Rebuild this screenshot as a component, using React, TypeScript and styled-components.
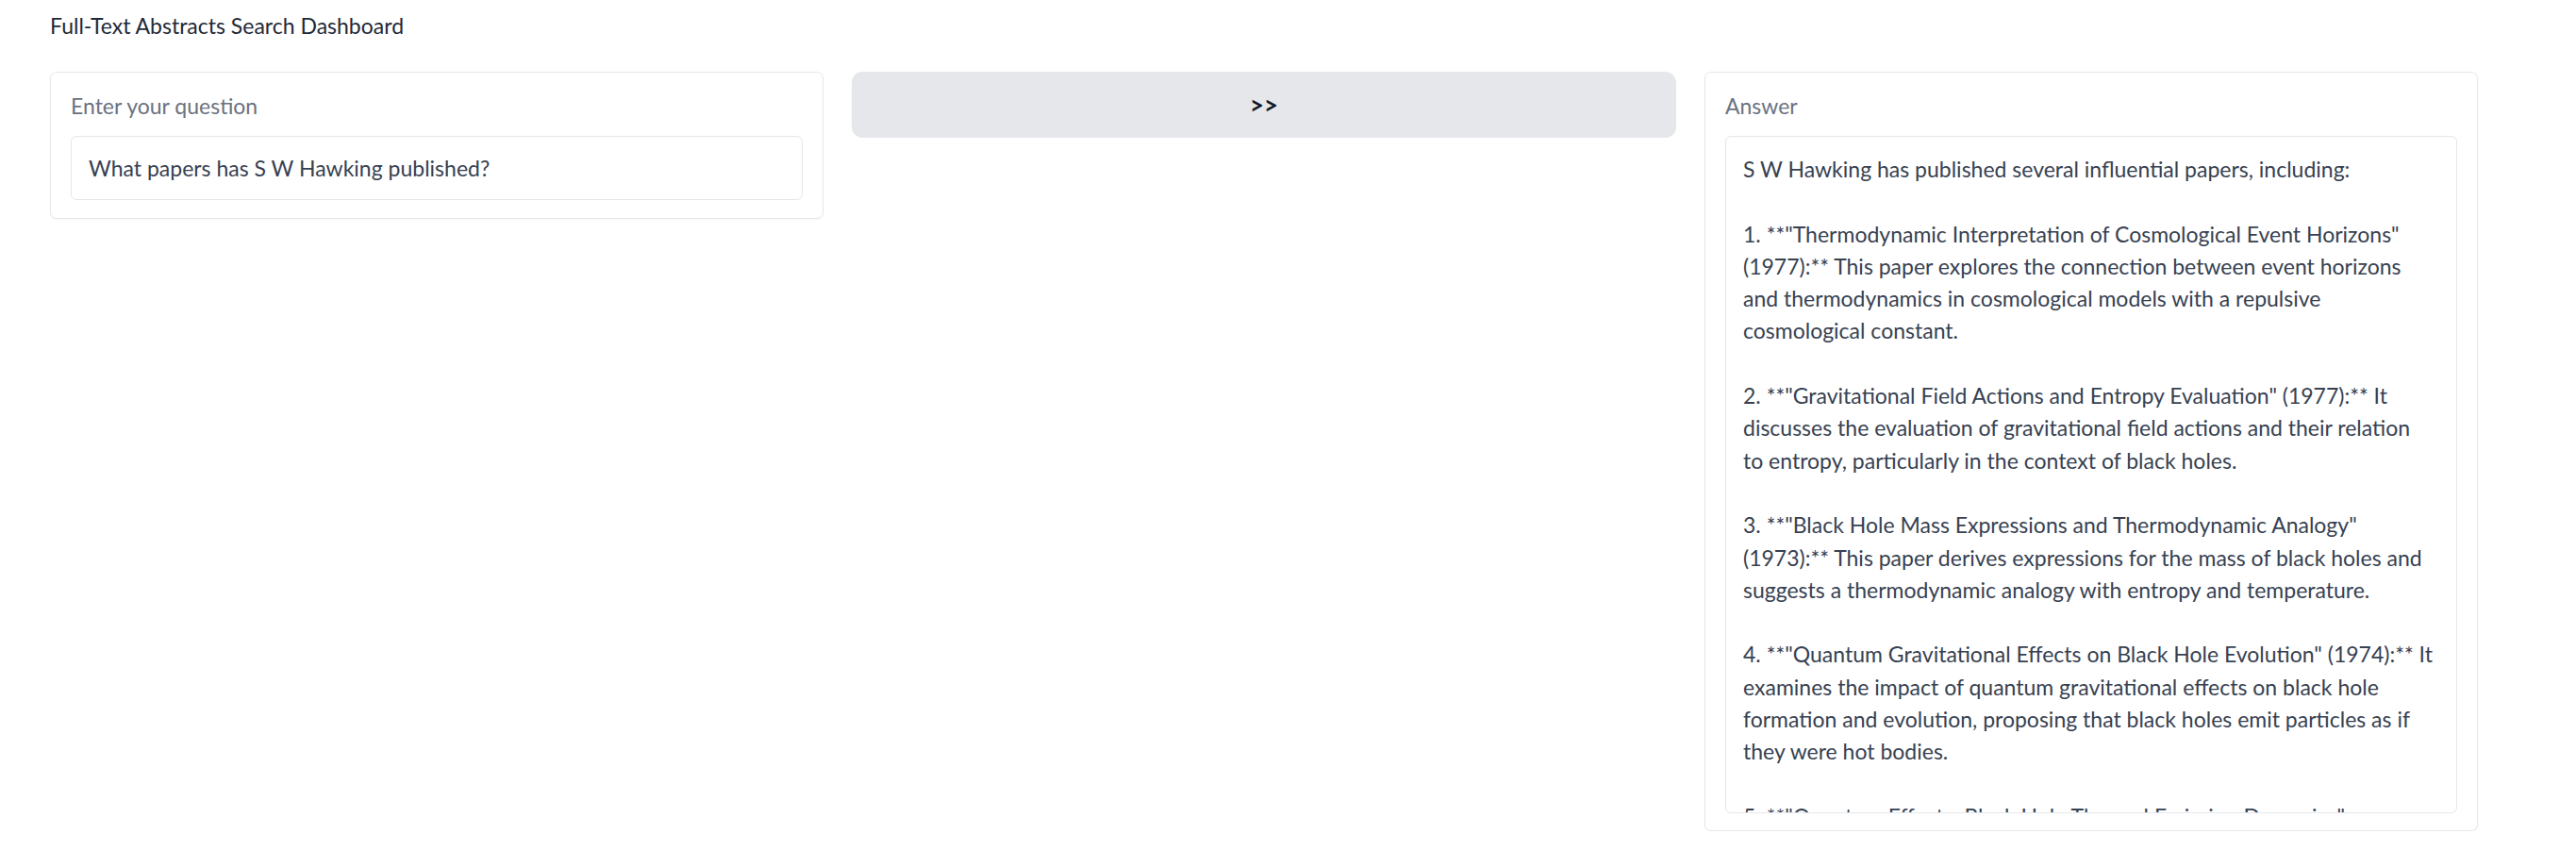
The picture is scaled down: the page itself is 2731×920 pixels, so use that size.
import React from 'react';
import styled, { createGlobalStyle } from 'styled-components';

const GlobalStyle = createGlobalStyle`
  html,
  body {
    margin: 0;
    padding: 0;
    background: #ffffff;
  }

  body {
    font-family: Lato, 'Noto Sans', sans-serif;
    color: #1f2937;
  }

  * {
    box-sizing: border-box;
  }
`;

const Page = styled.main`
  padding: 10px 104px 0 53px;
`;

const Title = styled.h1`
  margin: 0;
  font-size: 23px;
  font-weight: 400;
  line-height: 34.5px;
  color: #1f2937;
`;

const Row = styled.div`
  display: grid;
  grid-template-columns: 820px 874px 820px;
  gap: 30px;
  align-items: start;
  margin-top: 31px;
`;

interface CardProps {
  $tall?: boolean;
}

const Card = styled.section<CardProps>`
  display: flex;
  flex-direction: column;
  gap: 14.5px;
  padding: 18px 21px ${({ $tall }) => ($tall ? '18px' : '19px')};
  border: 1px solid #e5e7eb;
  border-radius: 7px;
  background: #ffffff;
  box-shadow: 0 1px 2px rgba(0, 0, 0, 0.04);
`;

const Label = styled.label`
  font-size: 23px;
  line-height: 34.5px;
  color: #6b7280;
`;

const fieldStyles = `
  width: 100%;
  margin: 0;
  padding: 16px 18px;
  border: 1px solid #e5e7eb;
  border-radius: 6px;
  background: #ffffff;
  font-family: Lato, 'Noto Sans', sans-serif;
  font-size: 23px;
  line-height: 34.3px;
  color: #374151;
  outline: none;
  box-shadow: inset 0 1px 1px rgba(0, 0, 0, 0.02);
`;

const QuestionInput = styled.input`
  ${fieldStyles}
  height: 68px;
`;

const AnswerBox = styled.textarea`
  ${fieldStyles}
  padding-top: 17.5px;
  height: 718px;
  resize: none;
  overflow: hidden;
  white-space: pre;
`;

const SubmitButton = styled.button`
  height: 70px;
  border: 1px solid #e5e7eb;
  border-radius: 11px;
  background: #e5e7eb;
  font-family: Lato, 'Noto Sans', sans-serif;
  font-size: 26px;
  font-weight: 700;
  color: #111827;
  cursor: pointer;
`;

const answer = `S W Hawking has published several influential papers, including:

1. **"Thermodynamic Interpretation of Cosmological Event Horizons"
(1977):** This paper explores the connection between event horizons
and thermodynamics in cosmological models with a repulsive
cosmological constant.

2. **"Gravitational Field Actions and Entropy Evaluation" (1977):** It
discusses the evaluation of gravitational field actions and their relation
to entropy, particularly in the context of black holes.

3. **"Black Hole Mass Expressions and Thermodynamic Analogy"
(1973):** This paper derives expressions for the mass of black holes and
suggests a thermodynamic analogy with entropy and temperature.

4. **"Quantum Gravitational Effects on Black Hole Evolution" (1974):** It
examines the impact of quantum gravitational effects on black hole
formation and evolution, proposing that black holes emit particles as if
they were hot bodies.

5. **"Quantum Effects: Black Hole Thermal Emission Dynamics"
(1975):** This paper studies the thermal emission of black holes.`;

const App = (): JSX.Element => (
  <>
    <GlobalStyle />
    <Page>
      <Title>Full-Text Abstracts Search Dashboard</Title>
      <Row>
        <Card>
          <Label htmlFor="question">Enter your question</Label>
          <QuestionInput id="question" type="text" defaultValue="What papers has S W Hawking published?" />
        </Card>
        <SubmitButton type="button">&gt;&gt;</SubmitButton>
        <Card $tall>
          <Label htmlFor="answer">Answer</Label>
          <AnswerBox id="answer" readOnly defaultValue={answer} />
        </Card>
      </Row>
    </Page>
  </>
);

export default App;
